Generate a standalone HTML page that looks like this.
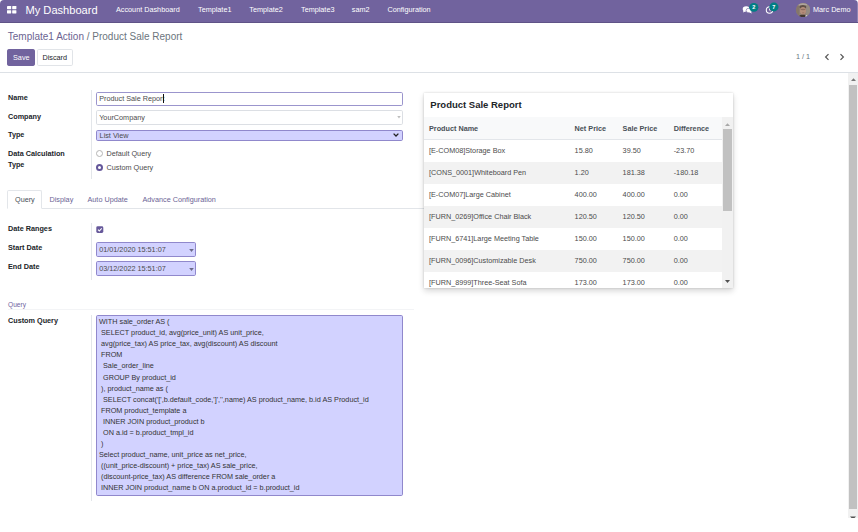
<!DOCTYPE html>
<html>
<head>
<meta charset="utf-8">
<title>Odoo</title>
<style>
*{box-sizing:border-box;margin:0;padding:0}
html,body{width:858px;height:532px;overflow:hidden;background:#fff}
body{font-family:"Liberation Sans",sans-serif;font-size:7.25px;color:#4c4c4c;position:relative}
.a{position:absolute;white-space:pre;line-height:1}
/* navbar */
#nav{position:absolute;left:0;top:0;width:858px;height:22.5px;background:#71639e;border-bottom:1px solid #5f5387;border-radius:4px 4px 0 0}
#nav .a{color:#fff}
.brand{font-size:11.1px;left:25.5px;top:5.3px}
.mi{top:6px;font-size:7.25px}
.badge{position:absolute;background:#017e84;color:#fff;font-weight:700;font-size:5.5px;border-radius:5px;height:9px;min-width:9px;text-align:center;line-height:9px}
/* control panel */
.bc{font-size:10px;left:7.8px;top:32px;color:#6c757d}
.bc span{color:#6b6391}
.btn{position:absolute;top:49px;height:17px;border-radius:1.7px;font-size:7.25px;line-height:15px;text-align:center}
#save{left:7.3px;width:28px;background:#71639e;border:1px solid #71639e;color:#fff}
#discard{left:37px;width:35.5px;background:#fff;border:1px solid #e1e4e8;color:#212529}
#sep{position:absolute;left:0;top:72px;width:858px;height:1px;background:#dde1e6}
/* main scrollbar */
#sb{position:absolute;left:848px;top:73px;width:10px;height:445px;background:#f1f1f1}
#sb .th{position:absolute;left:1px;top:11.5px;width:8px;height:424px;background:#c1c1c1}
/* form */
.lbl{font-weight:700;color:#212529;left:8px;font-size:7.25px}
.vl{position:absolute;left:91px;width:1px;background:#e3e6ea}
.inp{position:absolute;left:96px;width:307px;border-radius:1.7px;font-size:7.25px;color:#4c4c4c;white-space:pre}
.inp span{position:absolute;left:2.2px}
.pur{background:#d2d2ff;border:1px solid #9088cc}

/* tabs */
.tab{top:196px;font-size:7.25px;color:#6c6496}
#tabline{position:absolute;left:8px;top:208px;width:416px;height:1px;background:#e2e5e9}
#tabact{position:absolute;left:7px;top:190px;width:34.5px;height:19px;border:1px solid #e3e6ea;border-bottom:1px solid #fff;border-radius:2px 2px 0 0;background:#fff}
/* query */
#ta{position:absolute;left:96px;top:315px;width:307px;height:180.6px;border-radius:1.7px;padding:.3px 0 0 2px;line-height:11.04px;white-space:pre;font-size:7.25px;color:#333}
/* card */
#card{position:absolute;left:424px;top:92.5px;width:309px;height:195.5px;background:#fff;box-shadow:0 3px 6px rgba(0,0,0,.16),0 0 2px rgba(0,0,0,.16);overflow:hidden}
#card h3{position:absolute;left:6.3px;top:7.1px;font-size:9.5px;font-weight:700;color:#212529;line-height:1}
.row{position:absolute;left:0;width:297.5px;height:22px;font-size:7.25px;color:#4c4c4c}
.row.g{background:#f2f2f2}
.row.h{background:#f8f9fa;font-weight:700;color:#495057;border-bottom:1px solid #e3e6ea}
.row.h b{top:7.6px}
.row b,.row i{position:absolute;top:7.2px;font-style:normal;font-weight:inherit;line-height:1;white-space:pre}
.c1{left:5px}.c2{left:150.6px}.c3{left:198.6px}.c4{left:249.7px}
#isb{position:absolute;left:297.5px;top:24.5px;width:11.5px;height:171px;background:#f1f1f1}
#isb .th{position:absolute;left:1px;top:12px;width:9.5px;height:81.5px;background:#c1c1c1}
</style>
</head>
<body>
<!-- NAVBAR -->
<div id="nav">
  <svg class="a" style="left:7.35px;top:6.4px" width="9.4" height="7.4" viewBox="0 0 9.4 7.4"><rect x="0" y="0" width="4.2" height="3.2" rx=".4" fill="#fff"/><rect x="5.2" y="0" width="4.2" height="3.2" rx=".4" fill="#fff"/><rect x="0" y="4.2" width="4.2" height="3.2" rx=".4" fill="#fff"/><rect x="5.2" y="4.2" width="4.2" height="3.2" rx=".4" fill="#fff"/></svg>
  <div class="a brand">My Dashboard</div>
  <div class="a mi" style="left:116px">Account Dashboard</div>
  <div class="a mi" style="left:198px">Template1</div>
  <div class="a mi" style="left:249.3px">Template2</div>
  <div class="a mi" style="left:301px">Template3</div>
  <div class="a mi" style="left:351.8px">sam2</div>
  <div class="a mi" style="left:387.5px">Configuration</div>
  <!-- chat + clock icons with badges -->
  <svg class="a" style="left:736px;top:0" width="50" height="22" viewBox="0 0 50 22" font-family="Liberation Sans" font-weight="700" font-size="5.6" text-anchor="middle">
    <g transform="translate(6.7,6)"><ellipse cx="3.5" cy="2.9" rx="3.5" ry="2.7" fill="#fff"/><path d="M1 4.3 L0.3 6.4 L3 5.3z" fill="#fff"/><ellipse cx="6.4" cy="4.5" rx="3" ry="2.3" fill="#fff" stroke="#71639e" stroke-width=".6"/><path d="M8.1 5.8 L9.3 7.6 L6.6 6.6z" fill="#fff"/></g>
    <rect x="13.2" y="2.9" width="9.2" height="8.8" rx="4.4" fill="#017e84"/><text x="17.8" y="9.3" fill="#fff">2</text>
    <circle cx="33.5" cy="10" r="3.2" fill="none" stroke="#fff" stroke-width="1.05"/><path d="M33.5 8.2v2l1.2.7" stroke="#fff" stroke-width=".8" fill="none"/>
    <rect x="33.3" y="2.6" width="9.2" height="8.8" rx="4.4" fill="#017e84"/><text x="37.9" y="9" fill="#fff">7</text>
  </svg>
  <!-- avatar -->
  <svg class="a" style="left:795.9px;top:2.9px" width="14.2" height="14.2" viewBox="0 0 14 14"><defs><clipPath id="av"><circle cx="7" cy="7" r="7"/></clipPath><filter id="bl" x="-20%" y="-20%" width="140%" height="140%"><feGaussianBlur stdDeviation=".7"/></filter></defs><g clip-path="url(#av)"><rect width="14" height="14" fill="#8d7f74"/><g filter="url(#bl)"><rect x="-1" y="-1" width="16" height="16" fill="#8d7f74"/><rect x="10" y="0" width="5" height="12" fill="#958b83"/><rect x="-1" y="3" width="4" height="9" fill="#85766a"/><ellipse cx="6.5" cy="1.5" rx="4.5" ry="1.3" fill="#b0a69d"/><ellipse cx="6.8" cy="3.9" rx="3.3" ry="1.9" fill="#5f5046"/><ellipse cx="6.9" cy="7.6" rx="3" ry="3.7" fill="#b48d7a"/><ellipse cx="6.9" cy="6.4" rx="2.5" ry=".7" fill="#8e6d5f"/><ellipse cx="7.1" cy="9.6" rx="1.2" ry=".5" fill="#9a7264"/><path d="M2 15 Q2.8 11 6.8 11.6 Q10.5 11 11.6 15z" fill="#43362f"/><path d="M9.2 12.4 L11.2 11.8 L11.2 14.2 L9.5 14.2z" fill="#dcdce4"/></g></g></svg>
  <div class="a mi" style="left:813px">Marc Demo</div>
  <div class="a" style="left:857px;top:0;width:1px;height:22px;background:rgba(255,255,255,.22)"></div>
</div>

<!-- CONTROL PANEL -->
<div class="a bc"><span>Template1 Action</span> / Product Sale Report</div>
<div class="btn" id="save">Save</div>
<div class="btn" id="discard">Discard</div>
<div class="a" style="left:796px;top:53px;font-size:7.25px;color:#6c757d">1 / 1</div>
<svg class="a" style="left:824px;top:53.2px" width="6" height="8" viewBox="0 0 6 8"><path d="M4.5 1.1 L1.6 4 L4.5 6.9" fill="none" stroke="#555" stroke-width="1.2"/></svg>
<svg class="a" style="left:839.4px;top:53.2px" width="6" height="8" viewBox="0 0 6 8"><path d="M1.5 1.1 L4.4 4 L1.5 6.9" fill="none" stroke="#555" stroke-width="1.2"/></svg>
<div id="sep"></div>

<!-- MAIN SCROLLBAR -->
<div id="sb"><div class="th"></div>
  <svg class="a" style="left:2.8px;top:4.6px" width="5" height="3" viewBox="0 0 5 3"><path d="M0 3 L2.5 0.2 L5 3z" fill="#787878"/></svg>
  <svg class="a" style="left:2px;top:442.5px" width="6" height="4" viewBox="0 0 6 4"><path d="M0 0.5 L3 3.5 L6 0.5z" fill="#505050"/></svg>
</div>
<div class="a" style="left:0;top:518px;width:858px;height:14px;background:#fff"></div>

<!-- FORM -->
<div class="vl" style="top:90px;height:88.5px"></div>
<div class="a lbl" style="top:93.5px">Name</div>
<div class="a lbl" style="top:112.5px">Company</div>
<div class="a lbl" style="top:131px">Type</div>
<div class="a lbl" style="top:149.5px">Data Calculation</div>
<div class="a lbl" style="top:161px">Type</div>

<div class="inp" style="top:92px;height:13.5px;border:1px solid #9b95cd;background:#fff"><span style="top:.9px">Product Sale Report</span><i style="position:absolute;left:66.2px;top:1.2px;width:.8px;height:8.4px;background:#111"></i></div>
<div class="inp" style="top:110px;height:14.5px;border:1px solid #dcdfe4;background:#fff"><span style="top:2.2px">YourCompany</span>
  <svg style="position:absolute;right:1.2px;top:5.4px" width="4" height="2.6" viewBox="0 0 4 3"><path d="M0 0h4L2 2.8z" fill="#bdbdbd"/></svg></div>
<div class="inp pur" style="top:129.5px;height:11.5px"><span style="top:.7px;left:2.6px">List View</span>
  <svg style="position:absolute;right:3px;top:2.8px" width="6" height="4" viewBox="0 0 6 4"><path d="M.6 .6 L3 3 L5.4 .6" fill="none" stroke="#222" stroke-width="1.3"/></svg></div>

<div class="a" style="left:96.4px;top:149.9px;width:7px;height:7px;border-radius:50%;border:.8px solid #b5b5b5;background:#fff"></div>
<div class="a" style="left:106.5px;top:149.5px">Default Query</div>
<div class="a" style="left:96.4px;top:163.9px;width:7px;height:7px;border-radius:50%;border:2.1px solid #64579a;background:#fff"></div>
<div class="a" style="left:106.5px;top:163.5px">Custom Query</div>

<!-- TABS -->
<div id="tabline"></div>
<div id="tabact"></div>
<div class="a tab" style="left:15px;color:#495057">Query</div>
<div class="a tab" style="left:49.5px">Display</div>
<div class="a tab" style="left:87.5px">Auto Update</div>
<div class="a tab" style="left:142.5px">Advance Configuration</div>

<!-- DATE RANGE -->
<div class="vl" style="top:223px;height:57px"></div>
<div class="a lbl" style="top:225px">Date Ranges</div>
<div class="a lbl" style="top:244px">Start Date</div>
<div class="a lbl" style="top:263px">End Date</div>
<svg class="a" style="left:96px;top:226px" width="8" height="8" viewBox="0 0 8 8"><rect x=".3" y=".3" width="7" height="6.7" rx="1.4" fill="#66589a"/><path d="M2 3.7 L3.3 5 L5.7 2.3" fill="none" stroke="#fff" stroke-width="1.1"/></svg>
<div class="inp pur" style="top:242px;height:14.5px;width:99.5px"><span style="top:1.6px">01/01/2020 15:51:07</span><svg style="position:absolute;right:1px;top:5.7px" width="5" height="3" viewBox="0 0 5 3"><path d="M.2 0h4.6L2.5 2.9z" fill="#6a6a88"/></svg></div>
<div class="inp pur" style="top:261px;height:14.5px;width:99.5px"><span style="top:1.5px">03/12/2022 15:51:07</span><svg style="position:absolute;right:1px;top:5.7px" width="5" height="3" viewBox="0 0 5 3"><path d="M.2 0h4.6L2.5 2.9z" fill="#6a6a88"/></svg></div>

<!-- QUERY -->
<div class="a" style="left:8px;top:301.7px;font-size:6.6px;color:#71639e">Query</div>
<div class="a" style="left:8px;top:309px;width:406px;height:1px;background:#f3f4f6"></div>
<div class="vl" style="top:315px;height:185.5px"></div>
<div class="a lbl" style="top:316.8px">Custom Query</div>
<div id="ta" class="pur">WITH sale_order AS (
 SELECT product_id, avg(price_unit) AS unit_price,
 avg(price_tax) AS price_tax, avg(discount) AS discount
 FROM
  Sale_order_line
  GROUP By product_id
 ), product_name as (
  SELECT concat('[',b.default_code,']','',name) AS product_name, b.id AS Product_id
 FROM product_template a
  INNER JOIN product_product b
  ON a.id = b.product_tmpl_id
 )
Select product_name, unit_price as net_price,
 ((unit_price-discount) + price_tax) AS sale_price,
 (discount-price_tax) AS difference FROM sale_order a
 INNER JOIN product_name b ON a.product_id = b.product_id</div>

<!-- CARD -->
<div id="card">
<h3>Product Sale Report</h3>
<div class="row h" style="top:24.5px;height:22.5px"><b class="c1">Product Name</b><b class="c2">Net Price</b><b class="c3">Sale Price</b><b class="c4">Difference</b></div>
<div class="row" style="top:47.50px"><i class="c1">[E-COM08]Storage Box</i><i class="c2">15.80</i><i class="c3">39.50</i><i class="c4">-23.70</i></div>
<div class="row g" style="top:69.40px"><i class="c1">[CONS_0001]Whiteboard Pen</i><i class="c2">1.20</i><i class="c3">181.38</i><i class="c4">-180.18</i></div>
<div class="row" style="top:91.30px"><i class="c1">[E-COM07]Large Cabinet</i><i class="c2">400.00</i><i class="c3">400.00</i><i class="c4">0.00</i></div>
<div class="row g" style="top:113.20px"><i class="c1">[FURN_0269]Office Chair Black</i><i class="c2">120.50</i><i class="c3">120.50</i><i class="c4">0.00</i></div>
<div class="row" style="top:135.10px"><i class="c1">[FURN_6741]Large Meeting Table</i><i class="c2">150.00</i><i class="c3">150.00</i><i class="c4">0.00</i></div>
<div class="row g" style="top:157.00px"><i class="c1">[FURN_0096]Customizable Desk</i><i class="c2">750.00</i><i class="c3">750.00</i><i class="c4">0.00</i></div>
<div class="row" style="top:178.90px"><i class="c1">[FURN_8999]Three-Seat Sofa</i><i class="c2">173.00</i><i class="c3">173.00</i><i class="c4">0.00</i></div>

<div id="isb"><div class="th"></div>
  <svg class="a" style="left:3.2px;top:5.6px" width="5" height="3" viewBox="0 0 5 3"><path d="M0 3 L2.5 .2 L5 3z" fill="#a8a8a8"/></svg>
  <svg class="a" style="left:3.2px;top:162.5px" width="5" height="3" viewBox="0 0 5 3"><path d="M0 0 L2.5 3 L5 0z" fill="#505050"/></svg>
</div>
</div>
</body>
</html>
